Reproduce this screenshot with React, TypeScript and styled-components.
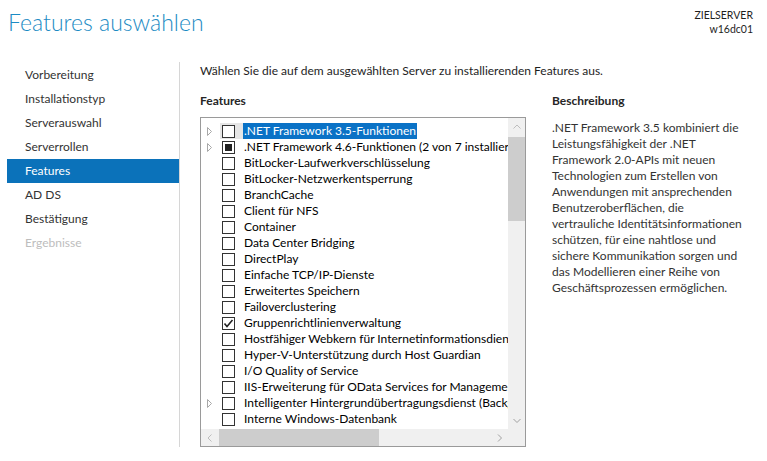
import React from "react";
import styled, { createGlobalStyle } from "styled-components";

const GlobalStyle = createGlobalStyle`
  html, body { margin: 0; padding: 0; background: #ffffff; }
  body { font-family: Lato, "Noto Sans", sans-serif; color: #1e1e1e; }
  * { box-sizing: border-box; }
`;

const Page = styled.div`
  width: 767px;
  height: 461px;
  overflow: hidden;
  display: flex;
  flex-direction: column;
  background: #ffffff;
`;

const Header = styled.header`
  height: 62px;
  flex: none;
  display: flex;
  justify-content: space-between;
  align-items: flex-start;
  padding: 6px 14px 0 8px;
`;

const Title = styled.h1`
  margin: 0;
  font-family: Lato, "Noto Sans", sans-serif;
  font-weight: 300;
  font-size: 23px;
  line-height: 32px;
  color: #1c8bc4;
`;

const ServerInfo = styled.div`
  padding-top: 2px;
  text-align: right;
  font-size: 10.5px;
  line-height: 14px;
  color: #1e1e1e;
`;

const Body = styled.div`
  flex: 1;
  min-height: 0;
  display: flex;
  padding-bottom: 14px;
`;

const Nav = styled.nav`
  width: 172px;
  margin-left: 7px;
  padding-top: 1px;
  display: flex;
  flex-direction: column;
`;

const NavItem = styled.div<{ $active?: boolean; $disabled?: boolean }>`
  height: 24px;
  line-height: 24px;
  padding-left: 18px;
  font-size: 12px;
  color: ${(p) => (p.$active ? "#ffffff" : p.$disabled ? "#bdbdbd" : "#333333")};
  background: ${(p) => (p.$active ? "#0b72ba" : "transparent")};
`;

const Content = styled.main`
  flex: 1;
  border-left: 1px solid #d6d6d6;
  padding: 1px 0 0 20px;
  display: flex;
  flex-direction: column;
`;

const Intro = styled.div`
  font-size: 12px;
  line-height: 16px;
  color: #1e1e1e;
`;

const Columns = styled.div`
  margin-top: 14px;
  display: flex;
  gap: 26px;
`;

const Column = styled.section<{ $width?: number }>`
  display: flex;
  flex-direction: column;
  width: ${(p) => (p.$width ? `${p.$width}px` : "auto")};
  flex: ${(p) => (p.$width ? "none" : "1")};
`;

const Heading = styled.h2`
  margin: 0 0 8px 0;
  font-size: 12px;
  line-height: 16px;
  font-weight: 700;
  color: #262626;
`;

const ListBox = styled.div`
  width: 326px;
  height: 330px;
  border: 1px solid #9a9a9a;
  display: grid;
  grid-template-columns: 1fr 17px;
  grid-template-rows: 1fr 17px;
  background: #ffffff;
`;

const Rows = styled.div`
  overflow: hidden;
  padding-top: 5px;
`;

const Row = styled.div`
  height: 16px;
  display: flex;
  align-items: center;
  white-space: nowrap;
`;

const ExpanderCell = styled.div`
  width: 19px;
  flex: none;
  display: flex;
  align-items: center;
  padding-left: 6px;
`;

const CheckCell = styled.div<{ $hot?: boolean }>`
  width: 23px;
  height: 16px;
  flex: none;
  display: flex;
  align-items: center;
  padding-left: 2px;
  background: ${(p) => (p.$hot ? "#e6e6e6" : "transparent")};
`;

const Box = styled.div`
  width: 13px;
  height: 13px;
  border: 1px solid #333333;
  background: #ffffff;
  display: flex;
  align-items: center;
  justify-content: center;
`;

const Fill = styled.div`
  width: 7px;
  height: 7px;
  background: #222222;
`;

const Label = styled.span<{ $selected?: boolean }>`
  font-size: 12px;
  line-height: 16px;
  height: 16px;
  padding: 0 1px;
  color: ${(p) => (p.$selected ? "#ffffff" : "#000000")};
  background: ${(p) => (p.$selected ? "#0a72c6" : "transparent")};
`;

const VScroll = styled.div`
  background: #f0f0f0;
  display: flex;
  flex-direction: column;
`;

const HScroll = styled.div`
  background: #f0f0f0;
  display: flex;
`;

const Corner = styled.div`
  background: #f0f0f0;
`;

const ArrowButton = styled.div`
  width: 17px;
  height: 17px;
  flex: none;
  display: flex;
  align-items: center;
  justify-content: center;
`;

const Track = styled.div<{ $vertical?: boolean }>`
  flex: 1;
  display: flex;
  flex-direction: ${(p) => (p.$vertical ? "column" : "row")};
`;

const Thumb = styled.div<{ $vertical?: boolean }>`
  background: #cdcdcd;
  flex: none;
  ${(p) =>
    p.$vertical
      ? "width: 17px; height: 84px; margin-top: 2px;"
      : "height: 17px; width: 160px; margin-left: 1px;"}
`;

const DescText = styled.div`
  padding-top: 3px;
  font-size: 12px;
  line-height: 16px;
  color: #333333;
`;

const DescLine = styled.div`
  white-space: nowrap;
`;

type Dir = "up" | "down" | "left" | "right";

const Chevron = ({ dir, light }: { dir: Dir; light?: boolean }) => {
  const pts: Record<Dir, string> = {
    up: "0.5,4.5 4,1 7.5,4.5",
    down: "0.5,1 4,4.5 7.5,1",
    left: "4.5,0.5 1,4 4.5,7.5",
    right: "1,0.5 4.5,4 1,7.5",
  };
  const horiz = dir === "left" || dir === "right";
  return (
    <svg width={horiz ? 6 : 8} height={horiz ? 8 : 6} viewBox={horiz ? "0 0 6 8" : "0 0 8 6"}>
      <polyline points={pts[dir]} fill="none" stroke={light ? "#bdbdbd" : "#a0a0a0"} strokeWidth="1" />
    </svg>
  );
};

const Expander = () => (
  <svg width="6" height="9" viewBox="0 0 6 9">
    <polygon points="0.5,0.5 4.5,4.5 0.5,8.5" fill="none" stroke="#a8a8a8" strokeWidth="1" />
  </svg>
);

const CheckMark = () => (
  <svg width="11" height="11" viewBox="0 0 11 11">
    <polyline points="1.5,5.5 4,8.5 9.5,2" fill="none" stroke="#222222" strokeWidth="1.6" />
  </svg>
);

type Feature = {
  label: string;
  expandable?: boolean;
  state?: "none" | "partial" | "checked";
  selected?: boolean;
};

const features: Feature[] = [
  { label: ".NET Framework 3.5-Funktionen", expandable: true, selected: true },
  { label: ".NET Framework 4.6-Funktionen (2 von 7 installiert)", expandable: true, state: "partial" },
  { label: "BitLocker-Laufwerkverschlüsselung" },
  { label: "BitLocker-Netzwerkentsperrung" },
  { label: "BranchCache" },
  { label: "Client für NFS" },
  { label: "Container" },
  { label: "Data Center Bridging" },
  { label: "DirectPlay" },
  { label: "Einfache TCP/IP-Dienste" },
  { label: "Erweitertes Speichern" },
  { label: "Failoverclustering" },
  { label: "Gruppenrichtlinienverwaltung", state: "checked" },
  { label: "Hostfähiger Webkern für Internetinformationsdienste" },
  { label: "Hyper-V-Unterstützung durch Host Guardian" },
  { label: "I/O Quality of Service" },
  { label: "IIS-Erweiterung für OData Services for Management" },
  { label: "Intelligenter Hintergrundübertragungsdienst (Background Intelligent Transfer Service)", expandable: true },
  { label: "Interne Windows-Datenbank" },
  { label: "IP-Adressverwaltungsserver (IPAM)" },
];

const navItems = [
  { label: "Vorbereitung" },
  { label: "Installationstyp" },
  { label: "Serverauswahl" },
  { label: "Serverrollen" },
  { label: "Features", active: true },
  { label: "AD DS" },
  { label: "Bestätigung" },
  { label: "Ergebnisse", disabled: true },
];

const description = [
  ".NET Framework 3.5 kombiniert die",
  "Leistungsfähigkeit der .NET",
  "Framework 2.0-APIs mit neuen",
  "Technologien zum Erstellen von",
  "Anwendungen mit ansprechenden",
  "Benutzeroberflächen, die",
  "vertrauliche Identitätsinformationen",
  "schützen, für eine nahtlose und",
  "sichere Kommunikation sorgen und",
  "das Modellieren einer Reihe von",
  "Geschäftsprozessen ermöglichen.",
];

export default function App() {
  return (
    <Page>
      <GlobalStyle />
      <Header>
        <Title>Features auswählen</Title>
        <ServerInfo>
          <div>ZIELSERVER</div>
          <div>w16dc01</div>
        </ServerInfo>
      </Header>
      <Body>
        <Nav>
          {navItems.map((n) => (
            <NavItem key={n.label} $active={n.active} $disabled={n.disabled}>
              {n.label}
            </NavItem>
          ))}
        </Nav>
        <Content>
          <Intro>Wählen Sie die auf dem ausgewählten Server zu installierenden Features aus.</Intro>
          <Columns>
            <Column $width={326}>
              <Heading>Features</Heading>
              <ListBox>
                <Rows>
                  {features.map((f) => (
                    <Row key={f.label}>
                      <ExpanderCell>{f.expandable && <Expander />}</ExpanderCell>
                      <CheckCell $hot={f.selected}>
                        <Box>
                          {f.state === "partial" && <Fill />}
                          {f.state === "checked" && <CheckMark />}
                        </Box>
                      </CheckCell>
                      <Label $selected={f.selected}>{f.label}</Label>
                    </Row>
                  ))}
                </Rows>
                <VScroll>
                  <ArrowButton>
                    <Chevron dir="up" light />
                  </ArrowButton>
                  <Track $vertical>
                    <Thumb $vertical />
                  </Track>
                  <ArrowButton>
                    <Chevron dir="down" />
                  </ArrowButton>
                </VScroll>
                <HScroll>
                  <ArrowButton>
                    <Chevron dir="left" light />
                  </ArrowButton>
                  <Track>
                    <Thumb />
                  </Track>
                  <ArrowButton>
                    <Chevron dir="right" />
                  </ArrowButton>
                </HScroll>
                <Corner />
              </ListBox>
            </Column>
            <Column>
              <Heading>Beschreibung</Heading>
              <DescText>
                {description.map((l) => (
                  <DescLine key={l}>{l}</DescLine>
                ))}
              </DescText>
            </Column>
          </Columns>
        </Content>
      </Body>
    </Page>
  );
}
